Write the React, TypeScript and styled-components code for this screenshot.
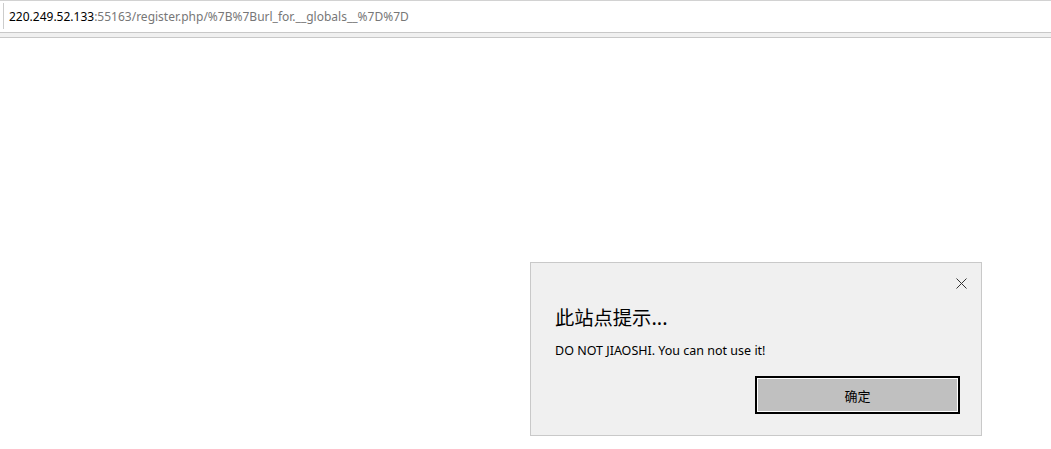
import styled, { createGlobalStyle } from 'styled-components'

const GlobalStyle = createGlobalStyle`
  html, body {
    margin: 0;
    padding: 0;
    background: #ffffff;
    font-family: "Noto Sans", "Noto Sans CJK SC", sans-serif;
  }
`

/* ── Browser chrome ── */
const Page = styled.div`
  position: relative;
  width: 1051px;
  height: 449px;
  overflow: hidden;
  background: #ffffff;
`

const TopBar = styled.div`
  height: 32px;
  border-top: 1px solid #d2d2d2;
  padding: 2px 0 0 3px;
  box-sizing: border-box;
`

const AddressField = styled.div`
  height: 26px;
  border-left: 1px solid #cccccc;
  padding-left: 5px;
  display: flex;
  align-items: center;
  font-size: 12px;
  color: #777777;
  white-space: nowrap;
`

const Host = styled.span`
  color: #000000;
`

const Divider = styled.div`
  height: 4px;
  background: #f0f0f0;
  border-top: 1px solid #c8c8c8;
  border-bottom: 1px solid #c8c8c8;
`

/* ── Alert dialog ── */
const Dialog = styled.div`
  position: absolute;
  left: 530px;
  top: 262px;
  width: 452px;
  height: 174px;
  box-sizing: border-box;
  background: #f0f0f0;
  border: 1px solid #c9c9c9;
  padding: 0 21px 0 24px;
  display: flex;
  flex-direction: column;
`

const DialogHeader = styled.div`
  display: flex;
  justify-content: flex-end;
  padding-top: 5px;
  margin-right: -16px;
`

const CloseButton = styled.button`
  width: 30px;
  height: 30px;
  border: none;
  background: transparent;
  padding: 0;
  display: flex;
  align-items: center;
  justify-content: center;
  cursor: pointer;
`

const DialogTitle = styled.div`
  margin-top: 6px;
  font-family: "Noto Sans CJK SC", sans-serif;
  font-size: 19.3px;
  line-height: 26px;
  color: #000000;
`

const DialogMessage = styled.div`
  margin-top: 12px;
  font-size: 12.5px;
  line-height: 18px;
  color: #000000;
`

const ButtonRow = styled.div`
  margin-top: 16px;
  display: flex;
  justify-content: flex-end;
`

const OkButton = styled.button`
  width: 205px;
  height: 38px;
  box-sizing: border-box;
  background: #c0c0c0;
  border: 2px solid #000000;
  box-shadow: inset 0 0 0 1px #ffffff;
  font-family: "Noto Sans CJK SC", sans-serif;
  font-size: 13px;
  color: #000000;
  padding: 0;
`

function CloseIcon() {
  return (
    <svg width="11" height="11" viewBox="0 0 11 11">
      <path d="M0.5 0.5L10.5 10.5M10.5 0.5L0.5 10.5" stroke="#333" strokeWidth="1" />
    </svg>
  )
}

/* ── Component ── */
export default function App() {
  return (
    <>
      <GlobalStyle />
      <Page>
        <TopBar>
          <AddressField>
            <Host>220.249.52.133</Host>:55163/register.php/%7B%7Burl_for.__globals__%7D%7D
          </AddressField>
        </TopBar>
        <Divider />

        <Dialog>
          <DialogHeader>
            <CloseButton aria-label="关闭">
              <CloseIcon />
            </CloseButton>
          </DialogHeader>
          <DialogTitle>此站点提示...</DialogTitle>
          <DialogMessage>DO NOT JIAOSHI. You can not use it!</DialogMessage>
          <ButtonRow>
            <OkButton>确定</OkButton>
          </ButtonRow>
        </Dialog>
      </Page>
    </>
  )
}
